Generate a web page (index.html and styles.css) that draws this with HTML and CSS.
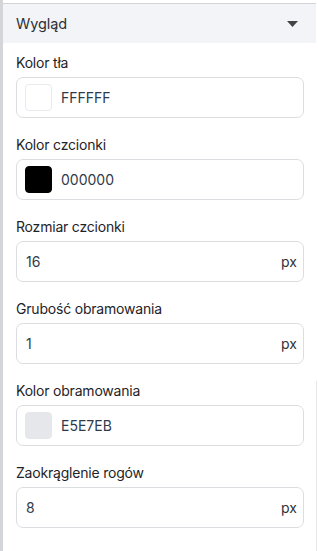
FILE: index.html
```html
<!DOCTYPE html>
<html lang="pl">
<head>
    <meta charset="UTF-8">
    <meta name="viewport" content="width=device-width, initial-scale=1.0">
    <title>Wygląd</title>
    <link rel="stylesheet" href="styles.css">
</head>
<body>

<div class="sidebar">
    <!-- Nagłówek sekcji -->
    <div class="section-head">
        <span>Wygląd</span>
        <svg class="caret" width="11" height="6" viewBox="0 0 11 6"><path d="M0 0 H11 L5.5 6 Z" fill="#444"/></svg>
    </div>

    <div class="fields">
        <div class="field">
            <label>Kolor tła</label>
            <div class="input color-input">
                <span class="swatch" style="background:#FFFFFF"></span>
                <span class="value">FFFFFF</span>
            </div>
        </div>

        <div class="field">
            <label>Kolor czcionki</label>
            <div class="input color-input">
                <span class="swatch" style="background:#000000; border-color:#000000"></span>
                <span class="value">000000</span>
            </div>
        </div>

        <div class="field">
            <label>Rozmiar czcionki</label>
            <div class="input">
                <span class="value">16</span>
                <span class="unit">px</span>
            </div>
        </div>

        <div class="field">
            <label>Grubość obramowania</label>
            <div class="input">
                <span class="value">1</span>
                <span class="unit">px</span>
            </div>
        </div>

        <div class="field">
            <label>Kolor obramowania</label>
            <div class="input color-input">
                <span class="swatch" style="background:#E5E7EB; border-color:#E5E7EB"></span>
                <span class="value">E5E7EB</span>
            </div>
        </div>

        <div class="field">
            <label>Zaokrąglenie rogów</label>
            <div class="input">
                <span class="value">8</span>
                <span class="unit">px</span>
            </div>
        </div>
    </div>
</div>

</body>
</html>
```

FILE: styles.css
```css
body {
    margin: 0;
    background-color: #fff;
    font-family: Inter, "Noto Sans", sans-serif;
    color: #1f2328;
}

.sidebar {
    width: 316px;
    min-height: 100vh;
    border-left: 3px solid #d4d5d9;
    padding-top: 3px;
    box-sizing: border-box;
    position: relative;
}

/* linia przewijania po prawej */
.sidebar::after {
    content: "";
    position: absolute;
    left: 313px;
    top: 381px;
    bottom: 0;
    width: 1px;
    background-color: #e6e7ea;
}

.section-head {
    height: 40px;
    border-top: 1px solid #d3d4d8;
    background-color: #f3f4f8;
    box-sizing: border-box;
    display: flex;
    align-items: center;
    justify-content: space-between;
    padding: 0 18px 0 13px;
    font-size: 14.5px;
    letter-spacing: -0.1px;
    color: #2b2f36;
}

.fields {
    padding: 11px 12px 0 13px;
}

.field {
    margin-bottom: 18px;
}

.field label {
    display: block;
    font-size: 14px;
    font-weight: 400;
    letter-spacing: -0.2px;
    line-height: 18px;
    margin-bottom: 5px;
    color: #1f2328;
}

.input {
    height: 41px;
    border: 1px solid #dcdde1;
    border-radius: 7px;
    box-sizing: border-box;
    display: flex;
    align-items: center;
    justify-content: space-between;
    padding: 0 6px 0 9px;
    font-size: 14px;
}

.color-input {
    justify-content: flex-start;
    padding-left: 8px;
    gap: 9px;
}

.swatch {
    width: 27px;
    height: 27px;
    border: 1px solid #e9eaed;
    border-radius: 4px;
    box-sizing: border-box;
}

.value {
    color: #2f3a4a;
}

.unit {
    color: #2f3136;
}
```
